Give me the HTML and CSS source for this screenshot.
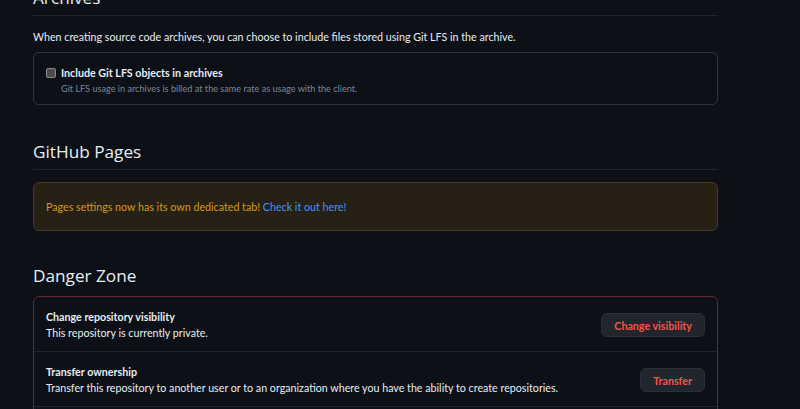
FILE: index.html
```html
<!DOCTYPE html>
<html>
<head>
<meta charset="utf-8">
<link rel="stylesheet" href="styles.css">
</head>
<body>
<main class="page">
  <section class="section">
    <h2 class="subhead">Archives</h2>
    <p class="desc">When creating source code archives, you can choose to include files stored using Git LFS in the archive.</p>
    <div class="box checkbox-box">
      <label class="check-row">
        <span class="checkbox"></span>
        <span class="check-label">Include Git LFS objects in archives</span>
      </label>
      <p class="note">Git LFS usage in archives is billed at the same rate as usage with the client.</p>
    </div>
  </section>

  <section class="section pages">
    <h2 class="subhead">GitHub Pages</h2>
    <div class="flash">Pages settings now has its own dedicated tab! <a class="link" href="#">Check it out here!</a></div>
  </section>

  <section class="section danger">
    <h2 class="subhead plain">Danger Zone</h2>
    <div class="box danger-box">
      <div class="row">
        <div class="row-text">
          <div class="row-title">Change repository visibility</div>
          <div class="row-desc">This repository is currently private.</div>
        </div>
        <button class="btn-danger">Change visibility</button>
      </div>
      <div class="row">
        <div class="row-text">
          <div class="row-title">Transfer ownership</div>
          <div class="row-desc">Transfer this repository to another user or to an organization where you have the ability to create repositories.</div>
        </div>
        <button class="btn-danger">Transfer</button>
      </div>
      <div class="row row-more"></div>
    </div>
  </section>
</main>
</body>
</html>
```

FILE: styles.css
```css
html, body {
  margin: 0;
  padding: 0;
  background: #0d1117;
  overflow: hidden;
}
body {
  font-family: "Lato", "Open Sans", sans-serif;
  font-size: 10.7px;
  color: #e6edf3;
}
.page {
  width: 685px;
  margin: -17px 0 0 33px;
}
.subhead {
  margin: 0;
  font-family: "Open Sans", sans-serif;
  font-size: 17.2px;
  font-weight: 400;
  line-height: 30px;
  padding-bottom: 2px;
  border-bottom: 1px solid #21262d;
  color: #e6edf3;
}
.subhead.plain {
  border-bottom: none;
}
.desc {
  margin: 12px 0 6px;
  line-height: 18px;
}
.box {
  border: 1px solid #30363d;
  border-radius: 6px;
}
.checkbox-box {
  padding: 11px 12px 8px;
}
.check-row {
  display: flex;
  align-items: center;
  gap: 5px;
  line-height: 18px;
}
.checkbox {
  width: 8px;
  height: 8px;
  border: 1px solid #8c8c8c;
  border-radius: 2px;
  background: #4b4b4b;
}
.check-label {
  font-weight: 700;
}
.note {
  margin: 0 0 0 15px;
  font-size: 9.15px;
  line-height: 14px;
  color: #7d8590;
}
.pages {
  margin-top: 32px;
}
.flash {
  margin-top: 12px;
  padding: 15px 12px 14px;
  line-height: 18px;
  color: #d29922;
  background: #272115;
  border: 1px solid #4a3b1b;
  border-radius: 6px;
}
.link {
  color: #4493f8;
  text-decoration: none;
}
.danger {
  margin-top: 30px;
}
.danger-box {
  margin-top: 3px;
  border-color: #5e2a2b;
}
.row {
  display: flex;
  align-items: center;
  justify-content: space-between;
  padding: 12px 12px 10px;
  border-top: 1px solid #21262d;
}
.row:first-child {
  border-top: none;
}
.row-more {
  height: 30px;
  padding: 0;
}
.row-title {
  font-weight: 700;
  line-height: 16px;
}
.row-desc {
  line-height: 16px;
}
.btn-danger {
  font-family: inherit;
  font-size: 10.7px;
  font-weight: 700;
  color: #f85149;
  background: #21262d;
  border: 1px solid #2b3038;
  border-radius: 6px;
  height: 24px;
  padding: 0 12px;
  cursor: pointer;
}
```
